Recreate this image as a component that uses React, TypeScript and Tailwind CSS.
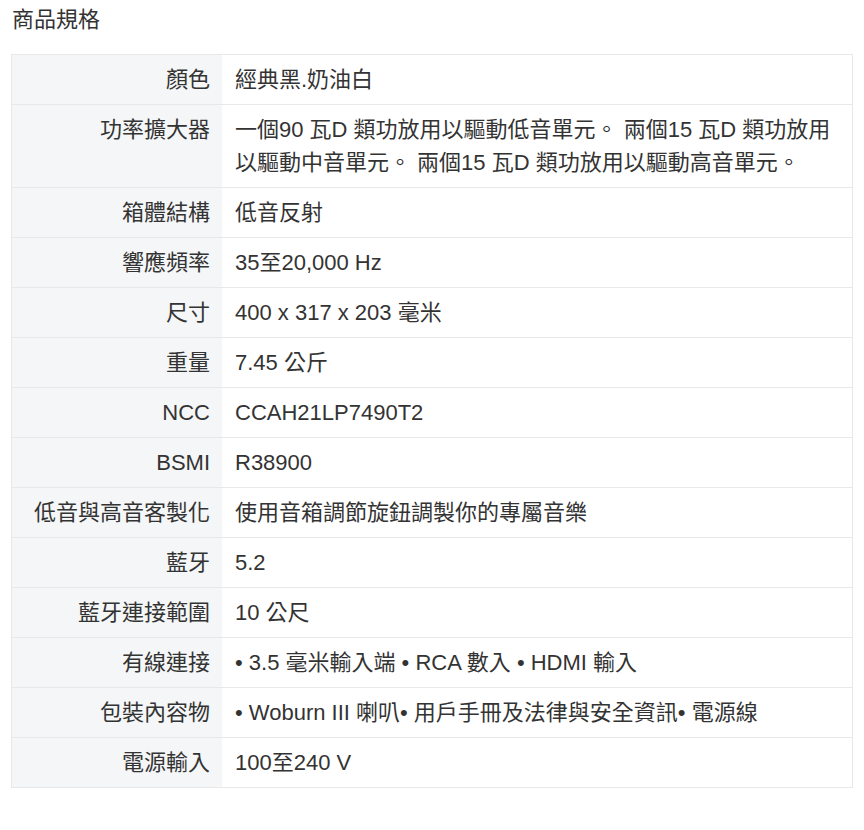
import React from "react";

const rows: [string, string][] = [
  ["顏色", "經典黑.奶油白"],
  ["功率擴大器", "一個90 瓦D 類功放用以驅動低音單元。 兩個15 瓦D 類功放用以驅動中音單元。 兩個15 瓦D 類功放用以驅動高音單元。"],
  ["箱體結構", "低音反射"],
  ["響應頻率", "35至20,000 Hz"],
  ["尺寸", "400 x 317 x 203 毫米"],
  ["重量", "7.45 公斤"],
  ["NCC", "CCAH21LP7490T2"],
  ["BSMI", "R38900"],
  ["低音與高音客製化", "使用音箱調節旋鈕調製你的專屬音樂"],
  ["藍牙", "5.2"],
  ["藍牙連接範圍", "10 公尺"],
  ["有線連接", "• 3.5 毫米輸入端 • RCA 數入 • HDMI 輸入"],
  ["包裝內容物", "• Woburn III 喇叭• 用戶手冊及法律與安全資訊• 電源線"],
  ["電源輸入", "100至240 V"],
];

export default function App() {
  return (
    <div
      className="w-[864px] min-h-[830px] bg-white px-[11px] text-[#333333]"
      style={{ fontFamily: '"Liberation Sans", Arial, "Noto Sans CJK TC", sans-serif' }}
    >
      <div className="pt-[4px] pl-[1px] text-[22px] leading-[32px]">商品規格</div>
      <div className="mt-[18px] border border-[#e8e8e8]">
        {rows.map(([k, v], i) => (
          <div
            key={i}
            className={`flex text-[22px] leading-[33px] ${i > 0 ? "border-t border-[#e8e8e8]" : ""}`}
          >
            <div className="w-[210px] shrink-0 bg-[#f5f6f7] pr-[12px] pt-[8px] pb-[8px] text-right">
              {k}
            </div>
            <div className="flex-1 pl-[13px] pr-[12px] pt-[8px] pb-[8px]">{v}</div>
          </div>
        ))}
      </div>
    </div>
  );
}
